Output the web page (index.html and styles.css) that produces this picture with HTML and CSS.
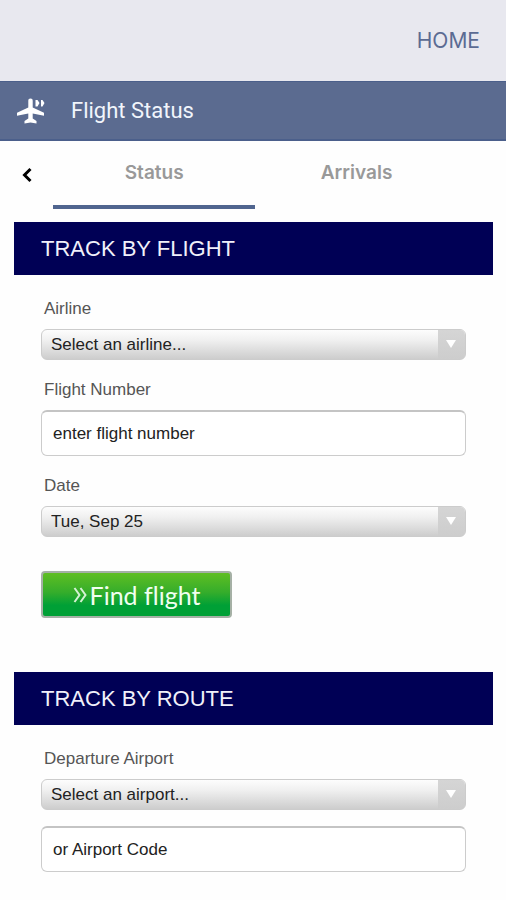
FILE: index.html
```html
<!DOCTYPE html>
<html lang="en">
<head>
<meta charset="utf-8">
<meta name="viewport" content="width=device-width, initial-scale=1">
<title>Flight Status</title>
<link rel="stylesheet" href="styles.css">
</head>
<body>
<header class="topbar"><a class="home" href="#">HOME</a></header>
<div class="titlebar">
  <svg class="plane" viewBox="0 0 30 28" aria-hidden="true">
    <path d="M14.500 1.500c1.500 0 2.200.9 2.200 2.300v6.700l11.300 5.300v3l-11.300-2.200v4.900l3.800 2.400v2.600l-6-1-6 1v-2.600l3.800-2.400v-4.900L1 18.800v-3l11.300-5.300V3.800c0-1.400.7-2.300 2.200-2.300z"/>
    <path d="M19.500 3h2l2 3-2 3.500h-2zM25 3h1.500l2 3-2 3.500H25z"/>
  </svg>
  <h1 class="title">Flight Status</h1>
</div>
<nav class="tabs">
  <button class="back" type="button" aria-label="Back">
    <svg viewBox="0 0 12 16" aria-hidden="true"><path d="M9.500 2L3.500 8l6 6"/></svg>
  </button>
  <a class="tab active" href="#">Status</a>
  <a class="tab" href="#">Arrivals</a>
</nav>
<main>
  <form class="panel">
    <h2 class="heading">TRACK BY FLIGHT</h2>
    <div class="fields">
      <label for="airline">Airline</label>
      <div class="picker"><select id="airline"><option>Select an airline...</option></select></div>
      <label for="number">Flight Number</label>
      <input id="number" type="text" placeholder="enter flight number">
      <label class="spaced" for="date">Date</label>
      <div class="picker"><select id="date"><option>Tue, Sep 25</option></select></div>
      <button class="find" type="button">
        <svg viewBox="0 0 14 16" aria-hidden="true"><path d="M1.500 1l5 7-5 7M7.500 1l5 7-5 7"/></svg>Find flight
      </button>
    </div>
  </form>
  <form class="panel">
    <h2 class="heading">TRACK BY ROUTE</h2>
    <div class="fields">
      <label for="airport">Departure Airport</label>
      <div class="picker"><select id="airport"><option>Select an airport...</option></select></div>
      <input class="code" type="text" placeholder="or Airport Code" aria-label="Airport code">
    </div>
  </form>
</main>
</body>
</html>
```
FILE: styles.css
```css
* { box-sizing: border-box; }
body {
  margin: 0;
  background: #fefefe;
  font-family: "Liberation Sans", Arial, sans-serif;
}
.topbar {
  display: flex;
  align-items: center;
  justify-content: flex-end;
  height: 81px;
  padding: 0 26px;
  background: #e8e8ef;
}
.home {
  color: #5b6b93;
  font: 21px/28px Inter, sans-serif;
  text-decoration: none;
}
.titlebar {
  display: flex;
  align-items: center;
  gap: 25px;
  height: 60px;
  padding: 0 16px;
  background: #5b6b90;
  border-top: 1px solid #4b5f8b;
  border-bottom: 2px solid #4b5f8b;
}
.plane { width: 30px; height: 28px; fill: #fff; }
.title {
  margin: 0;
  color: #f1f5fc;
  font: 22px/28px Roboto, sans-serif;
}
.tabs {
  display: flex;
  height: 68px;
  margin-bottom: 13px;
}
.back {
  flex: none;
  width: 53px;
  padding: 0;
  border: 0;
  background: none;
}
.back svg {
  display: block;
  width: 12px;
  height: 16px;
  margin: 0 auto;
  fill: none;
  stroke: #000;
  stroke-width: 3;
}
.tab {
  flex: 0 0 40%;
  border-bottom: 4px solid transparent;
  color: #999;
  font: 600 19px/64px Inter, sans-serif;
  text-align: center;
  text-decoration: none;
}
.active { border-color: #50658f; }
.panel { margin: 0 13px 54px 14px; }
.heading {
  margin: 0;
  padding: 0 27px;
  background: #000055;
  color: #f0f0fa;
  font-size: 22px;
  font-weight: 400;
  line-height: 53px;
}
.fields { padding: 22px 27px 0; }
label {
  display: block;
  padding: 0 3px;
  color: #555;
  font-size: 17px;
  line-height: 24px;
  margin-bottom: 8px;
}
input, select {
  display: block;
  width: 100%;
  color: #222;
  font: 17px "Liberation Sans", Arial, sans-serif;
}
input {
  height: 46px;
  padding: 0 11px;
  border: 1px solid #ccc;
  border-top: 2px solid #c4c4c4;
  border-radius: 6px;
  background: #fff;
}
input::placeholder { color: #222; opacity: 1; }
.picker { position: relative; margin-bottom: 18px; }
select {
  height: 31px;
  padding: 0 36px 0 9px;
  appearance: none;
  border: 1px solid #ccc;
  border-radius: 6px;
  background: linear-gradient(#fdfdfd, #f0f0f0 35%, #cdcdcd);
}
.picker::before {
  content: "";
  position: absolute;
  inset: 1px 1px 1px auto;
  width: 27px;
  border-radius: 0 5px 5px 0;
  background: linear-gradient(#d5d5d5, #cdcdcd);
}
.picker::after {
  content: "";
  position: absolute;
  top: 11px;
  right: 10px;
  border: 5px solid transparent;
  border-top: 8px solid #fff;
  border-bottom: 0;
}
.spaced { margin-top: 18px; }
.find {
  display: flex;
  align-items: center;
  justify-content: center;
  gap: 3px;
  width: 191px;
  height: 47px;
  margin-top: 34px;
  padding: 0;
  border: 2px solid #a5b0a5;
  border-radius: 4px;
  background: linear-gradient(#5fbe22, #35ad2b 45%, #00a036 75%, #00a036);
  color: #f0fff0;
  font: 25px/40px Lato, sans-serif;
  font-variant-ligatures: none;
}
.find svg { width: 14px; height: 16px; fill: none; stroke: #d5f2d5; stroke-width: 2; }
.code { margin-top: -2px; }
```
